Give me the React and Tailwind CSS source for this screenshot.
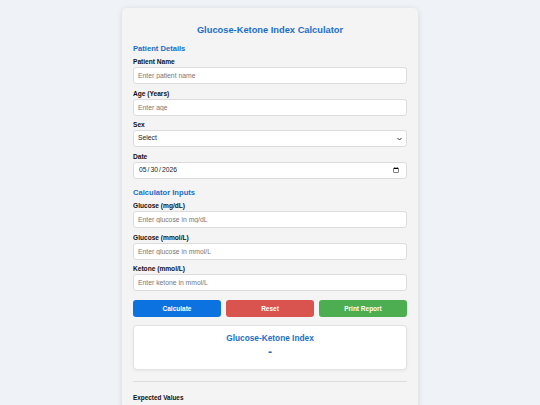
import React, { useState } from 'react';

const Field = ({ label, children }) => (
    <div className="mb-[4.5px]">
        <label className="block text-[6.6px] font-bold leading-[9px] mb-[1px] text-[#111]">{label}</label>
        {children}
    </div>
);

const inputCls = "block w-full h-[17px] bg-white border border-[#dcdcdc] rounded-[3px] px-[4px] text-[6.8px] text-[#222] placeholder:text-[#777] outline-none";

const App = () => {
    const [date, setDate] = useState('2026-05-30');

    return (
        <div className="min-h-screen bg-[#eff3f7] pt-[8px]" style={{ fontFamily: '"Liberation Sans", Arial, sans-serif' }}>
            <div className="mx-auto w-[296px] bg-[#f4f4f4] rounded-[5px] shadow-[0_1px_6px_rgba(0,0,0,0.12)] px-[11px] pt-[16px] pb-[10px] flex flex-col">
                <h1 className="text-center text-[9.3px] font-bold text-[#1a6fc9] leading-[13px] mb-[5.5px]">Glucose-Ketone Index Calculator</h1>

                <h2 className="text-[7.6px] font-bold text-[#1a6fc9] leading-[11px] mb-[3.5px]">Patient Details</h2>
                <Field label="Patient Name">
                    <input className={inputCls} placeholder="Enter patient name" />
                </Field>
                <Field label="Age (Years)">
                    <input className={inputCls} placeholder="Enter age" />
                </Field>
                <Field label="Sex">
                    <div className="relative">
                        <select className={inputCls + " appearance-none"} defaultValue="">
                            <option value="">Select</option>
                            <option>Male</option>
                            <option>Female</option>
                        </select>
                        <svg className="absolute right-[5px] top-[7px] w-[5px] h-[4px] pointer-events-none" viewBox="0 0 10 6" fill="none" stroke="#333" strokeWidth="2">
                            <path d="M1 1l4 4 4-4" />
                        </svg>
                    </div>
                </Field>
                <Field label="Date">
                    <input type="date" className={inputCls} value={date} onChange={(e) => setDate(e.target.value)} />
                </Field>

                <h2 className="text-[7.6px] font-bold text-[#1a6fc9] leading-[11px] mt-[3.5px] mb-[3.5px]">Calculator Inputs</h2>
                <Field label="Glucose (mg/dL)">
                    <input className={inputCls} placeholder="Enter glucose in mg/dL" />
                </Field>
                <Field label="Glucose (mmol/L)">
                    <input className={inputCls} placeholder="Enter glucose in mmol/L" />
                </Field>
                <Field label="Ketone (mmol/L)">
                    <input className={inputCls} placeholder="Enter ketone in mmol/L" />
                </Field>

                <div className="grid grid-cols-3 gap-[5px] mt-[4.5px]">
                    <button className="h-[17px] rounded-[3px] bg-[#0b72e0] text-white text-[6.5px] font-bold">Calculate</button>
                    <button className="h-[17px] rounded-[3px] bg-[#d9534f] text-white text-[6.5px] font-bold">Reset</button>
                    <button className="h-[17px] rounded-[3px] bg-[#4cae50] text-white text-[6.5px] font-bold">Print Report</button>
                </div>

                <div className="mt-[8px] h-[45px] bg-white border border-[#e2e2e2] rounded-[4px] shadow-[0_1px_3px_rgba(0,0,0,0.06)] flex flex-col items-center pt-[6px]">
                    <div className="text-[8.3px] font-bold text-[#1a6fc9] leading-[12px]">Glucose-Ketone Index</div>
                    <div className="text-[12px] font-black text-[#1a6fc9] leading-[14px] mt-[1px]">-</div>
                </div>

                <hr className="mt-[11px] border-0 border-t border-[#dcdcdc]" />

                <div className="mt-[12px] text-[6.4px] font-bold leading-[8px] text-[#111]">Expected Values</div>
            </div>
        </div>
    );
};

export default App;
